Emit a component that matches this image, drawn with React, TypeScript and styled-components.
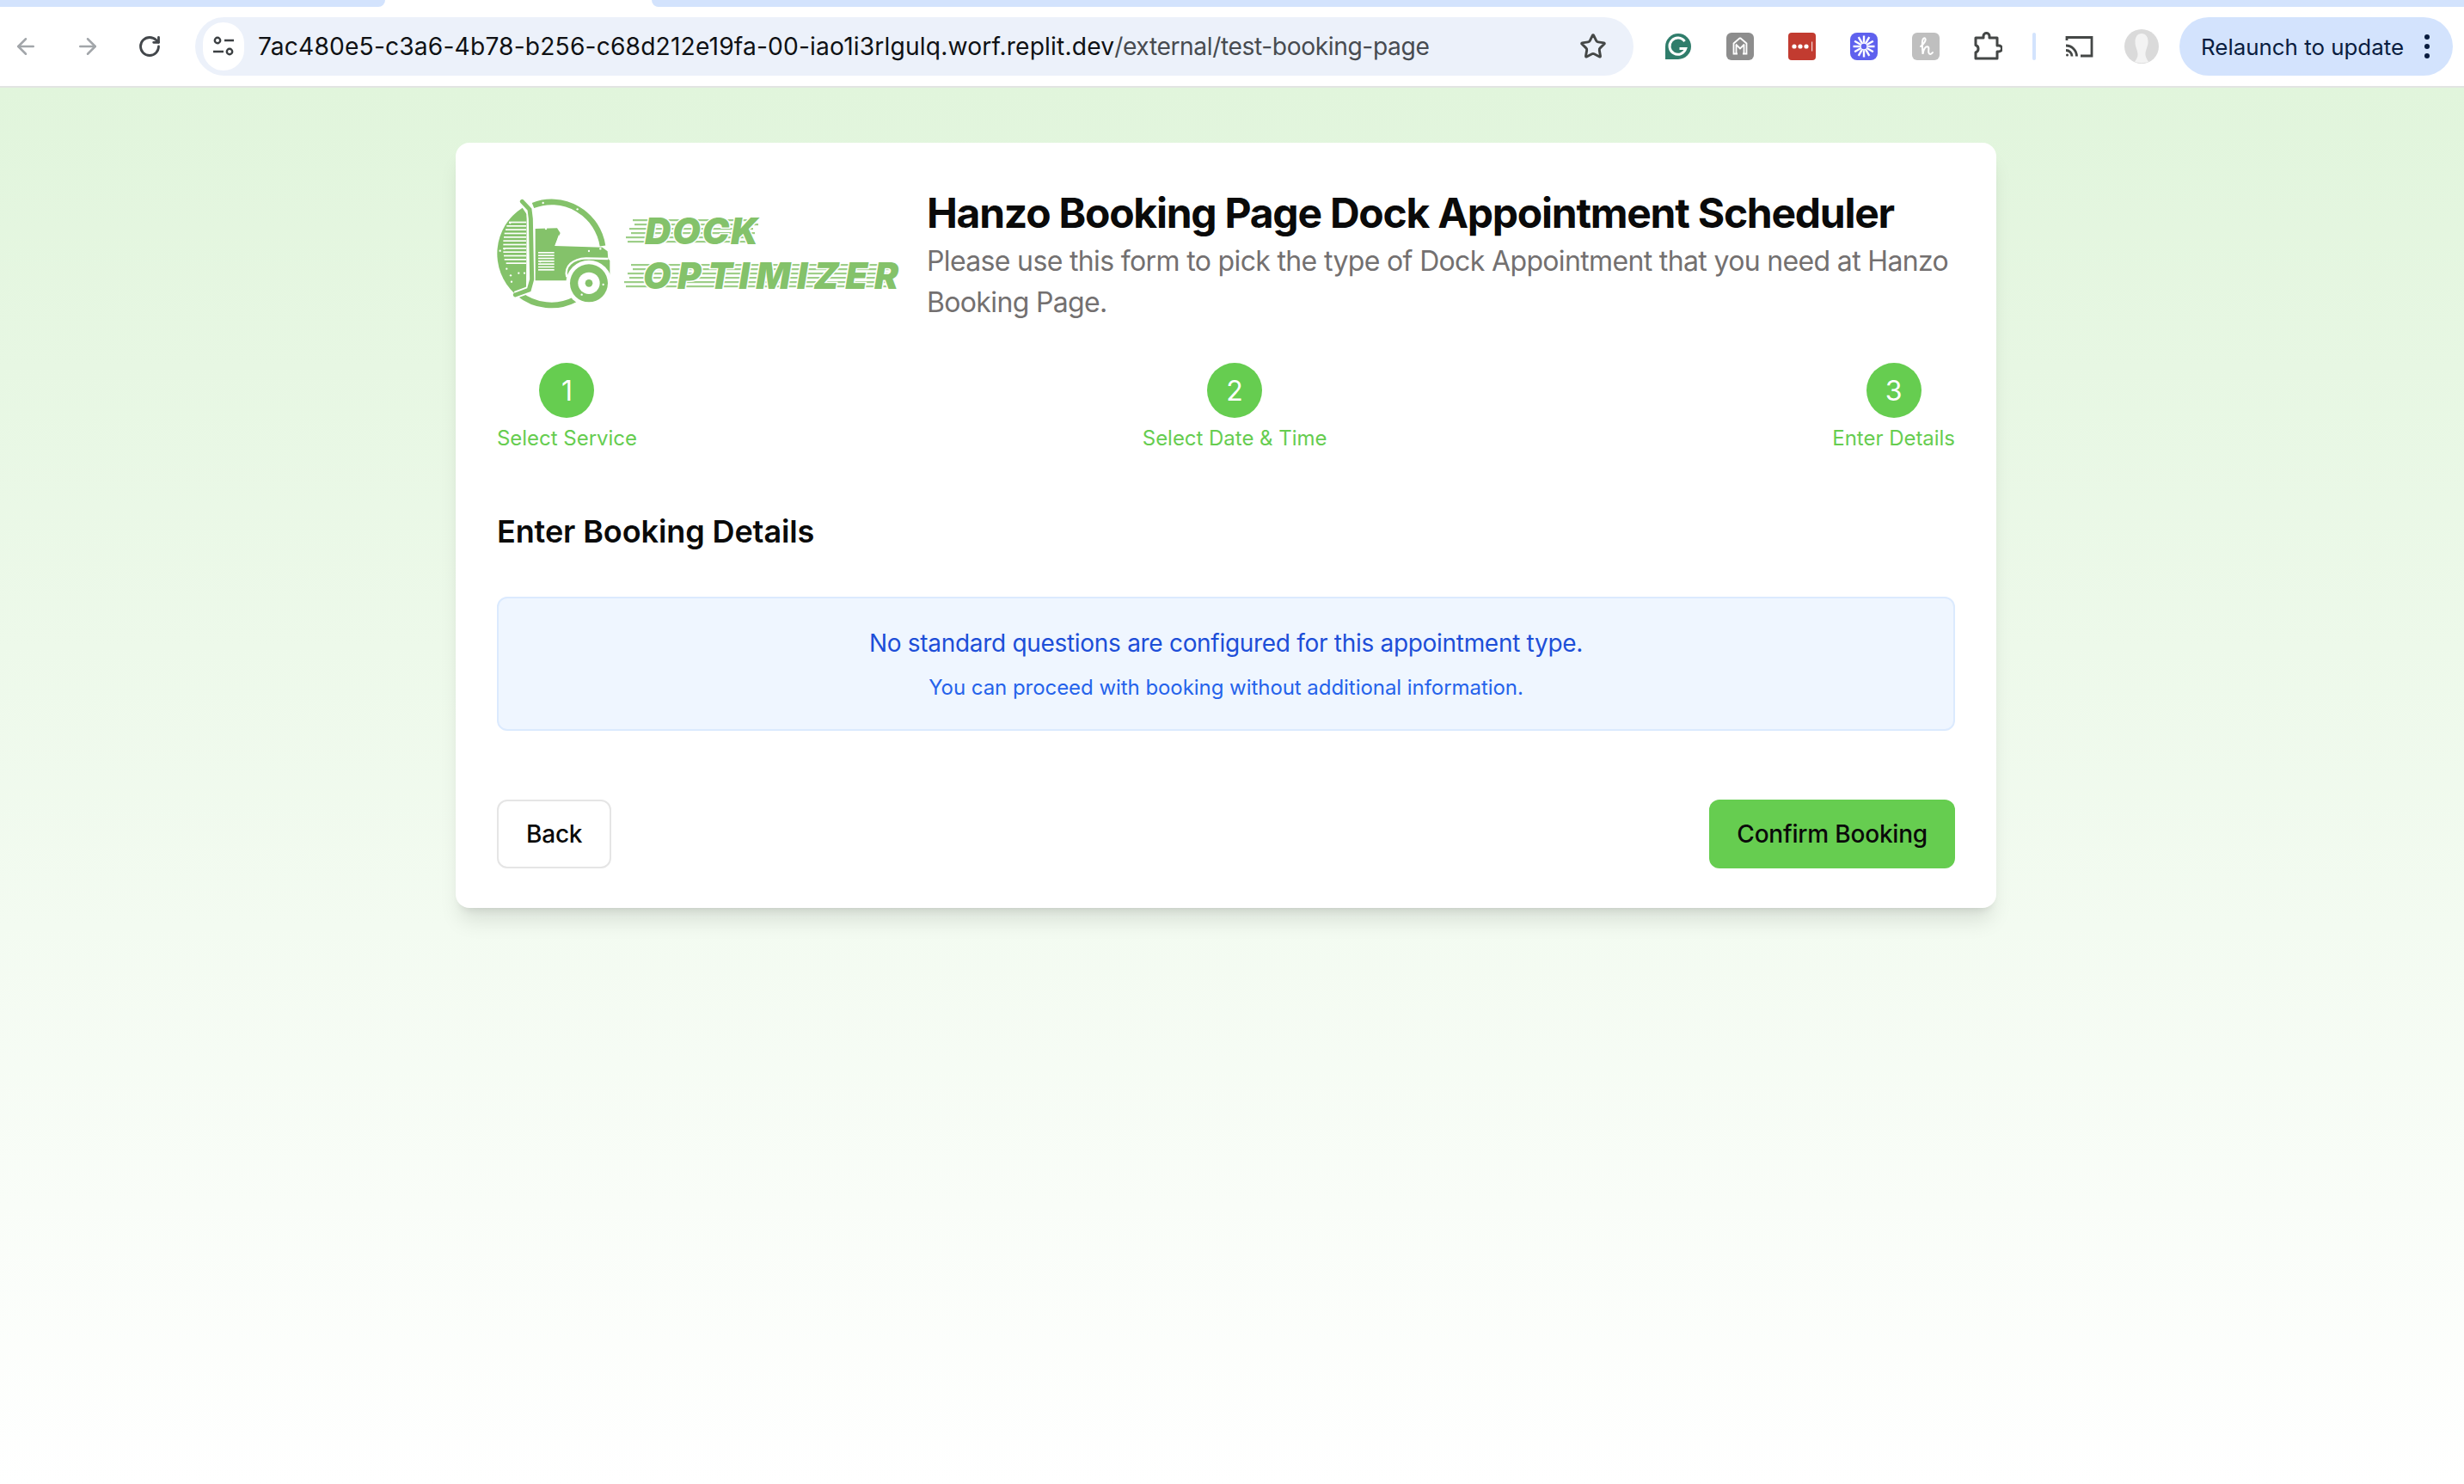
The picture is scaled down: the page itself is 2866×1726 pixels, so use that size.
import React from 'react';
import styled, { createGlobalStyle } from 'styled-components';
import { ArrowLeft, ArrowRight, RotateCw, Star } from 'lucide-react';

const GREEN = '#66cd50';
const LOGO_GREEN = '#84c26a';
const FONT = 'Inter, "Liberation Sans", sans-serif';

const GlobalStyle = createGlobalStyle`
    html, body {
        margin: 0;
        padding: 0;
        background: #ffffff;
        font-family: ${FONT};
    }
    * {
        box-sizing: border-box;
    }
`;

const Window = styled.div`
    width: 2866px;
    height: 1726px;
    display: flex;
    flex-direction: column;
    overflow: hidden;
`;

const TabStrip = styled.div`
    height: 8px;
    flex: 0 0 auto;
    display: flex;
    background: #ffffff;
`;

const TabSegment = styled.div<{ $width?: number }>`
    background: #d3e3fd;
    flex: ${(p) => (p.$width ? `0 0 ${p.$width}px` : '1 1 auto')};
    border-radius: ${(p) => (p.$width ? '0 0 14px 0' : '0 0 0 14px')};
`;

const ActiveTabGap = styled.div`
    flex: 0 0 310px;
`;

const Toolbar = styled.div`
    height: 94px;
    flex: 0 0 auto;
    display: flex;
    align-items: center;
    padding-right: 13px;
    background: #ffffff;
    border-bottom: 2px solid #e2e4e2;
`;

const NavGroup = styled.div`
    display: flex;
    width: 227px;
`;

const NavButton = styled.div<{ $muted?: boolean }>`
    width: 72px;
    height: 68px;
    margin: 0 6px 0 -6px;
    display: flex;
    align-items: center;
    justify-content: center;
    color: ${(p) => (p.$muted ? '#a2a6aa' : '#43474b')};
`;

const Omnibox = styled.div`
    width: 1673px;
    height: 68px;
    display: flex;
    align-items: center;
    padding: 0 31px 0 9px;
    border-radius: 34px;
    background: #ecf1fa;
`;

const SiteChip = styled.div`
    width: 48px;
    height: 56px;
    flex: 0 0 auto;
    display: flex;
    align-items: center;
    justify-content: center;
    border-radius: 28px;
    background: #ffffff;
    color: #3c4043;
`;

const UrlText = styled.div`
    flex: 1 1 auto;
    margin-left: 16px;
    font-size: 28.2px;
    line-height: 68px;
    letter-spacing: 0.16px;
    white-space: nowrap;
    color: #0f1114;
`;

const UrlTail = styled.span`
    letter-spacing: -0.4px;
    color: #474b50;
`;

const ExtensionRow = styled.div`
    display: flex;
    align-items: center;
    margin-left: 16px;
`;

const ExtensionSlot = styled.div`
    width: 72px;
    height: 68px;
    display: flex;
    align-items: center;
    justify-content: center;
`;

const ToolbarDivider = styled.div`
    width: 4px;
    height: 32px;
    margin: 0 15px 0 16px;
    border-radius: 2px;
    background: #d3e3fd;
`;

const RelaunchPill = styled.div`
    margin-left: 8px;
    width: 318px;
    height: 68px;
    display: flex;
    align-items: center;
    padding-left: 25px;
    border-radius: 34px;
    background: #d3e3fd;
    color: #0a1d40;
    font-size: 25.9px;
    white-space: nowrap;
`;

const MenuDots = styled.div`
    margin-left: 24px;
    display: flex;
    flex-direction: column;
    gap: 5px;
`;

const MenuDot = styled.span`
    width: 6px;
    height: 6px;
    border-radius: 50%;
    background: #0a1d40;
`;

const Page = styled.main`
    flex: 1 1 auto;
    display: flex;
    justify-content: center;
    align-items: flex-start;
    padding: 64px 14px 0 0;
    background: linear-gradient(180deg, #e1f5dc 0%, #ffffff 100%);
`;

const Card = styled.section`
    width: 1792px;
    padding: 48px 48px 46px;
    border-radius: 16px;
    background: #ffffff;
    box-shadow: 0 20px 25px -5px rgba(0, 0, 0, 0.1), 0 8px 10px -6px rgba(0, 0, 0, 0.1);
`;

const Header = styled.header`
    display: flex;
    align-items: center;
    gap: 30px;
    margin-bottom: 46px;
`;

const LogoSvg = styled.svg`
    flex: 0 0 auto;
    display: block;
`;

const LogoWord = styled.text`
    font-family: Inter, "Liberation Sans", sans-serif;
    font-weight: 900;
    font-style: italic;
    font-size: 42px;
    fill: ${LOGO_GREEN};
    stroke: #ffffff;
    stroke-width: 3px;
    paint-order: stroke;
`;

const HeaderText = styled.div`
    flex: 1 1 auto;
    padding-top: 2px;
`;

const Title = styled.h1`
    margin: 0;
    font-size: 48px;
    line-height: 64px;
    font-weight: 700;
    letter-spacing: -1.25px;
    color: #0a0a0a;
`;

const Subtitle = styled.p`
    margin: 0;
    font-size: 32px;
    line-height: 48px;
    letter-spacing: -0.65px;
    color: #737070;
`;

const Steps = styled.ol`
    display: flex;
    justify-content: space-between;
    list-style: none;
    margin: 0 0 64px;
    padding: 0;
`;

const Step = styled.li`
    display: flex;
    flex-direction: column;
    align-items: center;
    gap: 8px;
`;

const StepCircle = styled.div`
    width: 64px;
    height: 64px;
    display: flex;
    align-items: center;
    justify-content: center;
    border-radius: 50%;
    background: ${GREEN};
    color: #ffffff;
    font-size: 32px;
`;

const StepLabel = styled.div`
    font-size: 24px;
    line-height: 32px;
    letter-spacing: -0.03px;
    color: ${GREEN};
`;

const SectionTitle = styled.h2`
    margin: 0 0 48px;
    font-size: 36px;
    line-height: 56px;
    font-weight: 600;
    letter-spacing: -0.1px;
    color: #0a0a0a;
`;

const Notice = styled.div`
    height: 156px;
    padding: 28px 0 0;
    border: 2px solid #dbeafe;
    border-radius: 12px;
    background: #eff6ff;
    text-align: center;
    margin-bottom: 80px;
`;

const NoticeTitle = styled.p`
    margin: 0 0 8px;
    font-size: 28px;
    line-height: 48px;
    letter-spacing: -0.3px;
    color: #1d4ed8;
`;

const NoticeHint = styled.p`
    margin: 0;
    font-size: 24px;
    line-height: 40px;
    letter-spacing: -0.05px;
    color: #2563eb;
`;

const Actions = styled.div`
    display: flex;
    justify-content: space-between;
`;

const Button = styled.button<{ $primary?: boolean }>`
    height: 80px;
    padding: 0 32px;
    border: ${(p) => (p.$primary ? 'none' : '2px solid #e5e5e5')};
    border-radius: 12px;
    background: ${(p) => (p.$primary ? GREEN : '#ffffff')};
    color: #0a0a0a;
    font-family: ${FONT};
    font-size: 28px;
    font-weight: 500;
    letter-spacing: -0.2px;
`;

const speedRows = [0, 5, 10, 15, 20, 25];
const wheelDots = [
    [70, 115], [50, 205], [35, 212], [72, 298], [58, 275], [100, 290], [120, 290], [75, 320],
    [185, 45], [305, 67], [195, 135], [345, 213], [385, 205], [395, 330], [320, 365], [175, 250],
];
const discStripes = [
    [66, 110], [58, 123], [54, 136], [50, 149], [48, 162], [46, 175],
    [46, 188], [46, 201], [46, 214], [48, 227], [50, 240], [56, 253],
];

function TruckMark() {
    return (
        <g transform="translate(570 220) scale(0.3333)">
            <path d="M150 54 A180 180 0 0 1 393 195" fill="none" stroke={LOGO_GREEN} strokeWidth="20" />
            <path d="M100 361 A180 180 0 0 0 297 382" fill="none" stroke={LOGO_GREEN} strokeWidth="20" />
            <path d="M113 62 L128 85 L126 340 L85 361 A190 190 0 0 1 113 62 Z" fill={LOGO_GREEN} />
            {discStripes.map(([x, y]) => (
                <rect key={y} x={x} y={y} width={126 - x} height={5} fill="#ffffff" />
            ))}
            <path d="M112 40 L138 68 L142 100 L146 312 L136 348 L88 366" fill="none" stroke="#ffffff" strokeWidth="26" />
            <path d="M112 40 L138 68 L142 100 L146 312 L136 348 L88 366" fill="none" stroke={LOGO_GREEN} strokeWidth="15" strokeLinecap="round" />
            <path d="M158 135 L234 133 L245 150 L226 195 L392 200 L410 214 L412 240 L418 246 L418 302 L270 316 L158 316 Z" fill={LOGO_GREEN} />
            <path d="M240 156 L226 194 L256 194 Z" fill="#ffffff" />
            {[216, 226, 236, 246, 256, 266, 276].map((y) => (
                <rect key={y} x={168} y={y} width={56} height={5} fill="#ffffff" />
            ))}
            <path d="M268 304 C258 264 290 240 335 238 L412 240" fill="none" stroke="#ffffff" strokeWidth="7" />
            <circle cx="345" cy="325" r="80" fill="#ffffff" />
            <circle cx="345" cy="325" r="66" fill={LOGO_GREEN} />
            <circle cx="345" cy="325" r="38" fill="#ffffff" />
            <circle cx="345" cy="325" r="13" fill={LOGO_GREEN} />
            {wheelDots.map(([cx, cy]) => (
                <circle key={`${cx}-${cy}`} cx={cx} cy={cy} r="3.5" fill="#ffffff" />
            ))}
        </g>
    );
}

function SpeedWord(props: { text: string; x: number; end: number; top: number; textWidth: number }) {
    return (
        <g>
            {speedRows.map((offset, i) => (
                <rect
                    key={offset}
                    x={props.x - 14 - i * 2 + (i % 2) * 4}
                    y={props.top + offset + 1}
                    width={props.end - props.x + 14}
                    height={2.2}
                    fill={LOGO_GREEN}
                    opacity={0.8}
                />
            ))}
            <LogoWord x={props.x} y={props.top + 30} textLength={props.textWidth} lengthAdjust="spacing">
                {props.text}
            </LogoWord>
        </g>
    );
}

function Logo() {
    return (
        <LogoSvg width="470" height="160" viewBox="578 214 470 160" role="img" aria-label="Dock Optimizer">
            <TruckMark />
            <SpeedWord text="DOCK" x={750} end={880} top={253} textWidth={132} />
            <SpeedWord text="OPTIMIZER" x={748} end={1042} top={305} textWidth={297} />
        </LogoSvg>
    );
}

function TuneIcon() {
    return (
        <svg width="26" height="24" viewBox="0 0 26 24" fill="none" stroke="#3c4043" strokeWidth="2.4">
            <circle cx="6" cy="5" r="3.2" />
            <path d="M14 5h11M1 18h12" />
            <circle cx="20" cy="18" r="3.2" />
        </svg>
    );
}

function GrammarlyIcon() {
    return (
        <svg width="32" height="32" viewBox="0 0 32 32">
            <path d="M1 31V16A15 15 0 1 1 16 31Z" fill="#2f7d6b" />
            <path d="M23.5 10.2A9.6 9.6 0 1 0 24.8 18.4H17.5" fill="none" stroke="#ffffff" strokeWidth="3" />
        </svg>
    );
}

function HouseMailIcon() {
    return (
        <svg width="32" height="32" viewBox="0 0 32 32">
            <rect width="32" height="32" rx="6" fill="#8d8d8d" />
            <path d="M16 6 8.500 12.500V24.500H13M16 6l7.500 6.500V24.500H19" fill="none" stroke="#ffffff" strokeWidth="1.800" />
            <path d="M11 13.500 16 18.500 21 13.500M11.500 14V24.500M20.500 14V24.500" fill="none" stroke="#ffffff" strokeWidth="1.800" />
        </svg>
    );
}

function LastPassIcon() {
    return (
        <svg width="32" height="32" viewBox="0 0 32 32">
            <rect width="32" height="32" rx="4" fill="#c23b30" />
            <circle cx="7" cy="16" r="2.6" fill="#ffffff" />
            <circle cx="14" cy="16" r="2.6" fill="#ffffff" />
            <circle cx="21" cy="16" r="2.6" fill="#ffffff" />
            <rect x="27" y="10.500" width="1.200" height="11" fill="#f4d6d3" />
        </svg>
    );
}

function BurstIcon() {
    const rays = Array.from({ length: 12 }, (_, i) => i * 30);
    return (
        <svg width="32" height="32" viewBox="0 0 32 32">
            <rect width="32" height="32" rx="8" fill="#5f61ee" />
            {rays.map((angle) => (
                <rect key={angle} x="14.8" y="3.500" width="2.400" height="8" fill="#ffffff" transform={`rotate(${angle} 16 16)`} />
            ))}
            <circle cx="16" cy="16" r="4" fill="none" stroke="#ffffff" strokeWidth="1.500" />
        </svg>
    );
}

function ScriptIcon() {
    return (
        <svg width="32" height="32" viewBox="0 0 32 32">
            <rect width="32" height="32" rx="6" fill="#bfbfbf" />
            <path d="M10 16C14 13 17 8 15 6.500C13 5.500 11.500 9 11.800 14L12.500 25C13 19 16 15.500 18.500 16.500C21 17.500 17.500 22 20 24.500C21.500 25.500 23 24.500 24 23" fill="none" stroke="#ffffff" strokeWidth="2" strokeLinecap="round" />
        </svg>
    );
}

function PuzzleIcon() {
    return (
        <svg width="34" height="34" viewBox="0 0 34 34" fill="none" stroke="#444746" strokeWidth="3" strokeLinejoin="round">
            <path d="M3 7h9V5a3.500 3.500 0 0 1 7 0v2h9v9h2a3.500 3.500 0 0 1 0 7h-2v8H3v-7a4.500 4.500 0 0 0 0-8.500Z" />
        </svg>
    );
}

function CastIcon() {
    return (
        <svg width="34" height="26" viewBox="0 0 34 26" fill="none" stroke="#444746" strokeWidth="2.800">
            <path d="M2 6V2.500h29V24H18" />
            <path d="M1 12a12.500 12.500 0 0 1 12.500 12.500M1 17.500a7 7 0 0 1 7 7" />
            <circle cx="2.500" cy="23" r="1.500" fill="#444746" stroke="none" />
        </svg>
    );
}

function AvatarIcon() {
    return (
        <svg width="40" height="40" viewBox="0 0 40 40">
            <circle cx="20" cy="20" r="20" fill="#dadada" />
            <path d="M20 5c5 0 8 4 7.500 11-.5 5-3.500 9-3 14 .3 3 2 5 3.500 8-4 1.500-12 1.500-16 0 1.500-3 3.500-5 3.500-8C16 25 12.500 21 12.500 15 12.500 9 15 5 20 5Z" fill="#f3f3f3" />
        </svg>
    );
}

const extensions = [
    <GrammarlyIcon key="g" />,
    <HouseMailIcon key="m" />,
    <LastPassIcon key="l" />,
    <BurstIcon key="b" />,
    <ScriptIcon key="s" />,
    <PuzzleIcon key="p" />,
];

const steps = ['Select Service', 'Select Date & Time', 'Enter Details'];

export default function App() {
    return (
        <Window>
            <GlobalStyle />
            <TabStrip>
                <TabSegment $width={448} />
                <ActiveTabGap />
                <TabSegment />
            </TabStrip>
            <Toolbar>
                <NavGroup>
                    <NavButton $muted>
                        <ArrowLeft size={30} strokeWidth={2} />
                    </NavButton>
                    <NavButton $muted>
                        <ArrowRight size={30} strokeWidth={2} />
                    </NavButton>
                    <NavButton>
                        <RotateCw size={28} strokeWidth={2.4} />
                    </NavButton>
                </NavGroup>
                <Omnibox>
                    <SiteChip>
                        <TuneIcon />
                    </SiteChip>
                    <UrlText>
                        7ac480e5-c3a6-4b78-b256-c68d212e19fa-00-iao1i3rlgulq.worf.replit.dev
                        <UrlTail>/external/test-booking-page</UrlTail>
                    </UrlText>
                    <Star size={32} strokeWidth={2.2} color="#444746" />
                </Omnibox>
                <ExtensionRow>
                    {extensions.map((icon) => (
                        <ExtensionSlot key={icon.key}>{icon}</ExtensionSlot>
                    ))}
                    <ToolbarDivider />
                    <ExtensionSlot>
                        <CastIcon />
                    </ExtensionSlot>
                    <ExtensionSlot>
                        <AvatarIcon />
                    </ExtensionSlot>
                </ExtensionRow>
                <RelaunchPill>
                    Relaunch to update
                    <MenuDots>
                        <MenuDot />
                        <MenuDot />
                        <MenuDot />
                    </MenuDots>
                </RelaunchPill>
            </Toolbar>
            <Page>
                <Card>
                    <Header>
                        <Logo />
                        <HeaderText>
                            <Title>Hanzo Booking Page Dock Appointment Scheduler</Title>
                            <Subtitle>
                                Please use this form to pick the type of Dock Appointment that you need at Hanzo Booking Page.
                            </Subtitle>
                        </HeaderText>
                    </Header>
                    <Steps>
                        {steps.map((label, i) => (
                            <Step key={label}>
                                <StepCircle>{i + 1}</StepCircle>
                                <StepLabel>{label}</StepLabel>
                            </Step>
                        ))}
                    </Steps>
                    <SectionTitle>Enter Booking Details</SectionTitle>
                    <Notice>
                        <NoticeTitle>No standard questions are configured for this appointment type.</NoticeTitle>
                        <NoticeHint>You can proceed with booking without additional information.</NoticeHint>
                    </Notice>
                    <Actions>
                        <Button>Back</Button>
                        <Button $primary>Confirm Booking</Button>
                    </Actions>
                </Card>
            </Page>
        </Window>
    );
}
